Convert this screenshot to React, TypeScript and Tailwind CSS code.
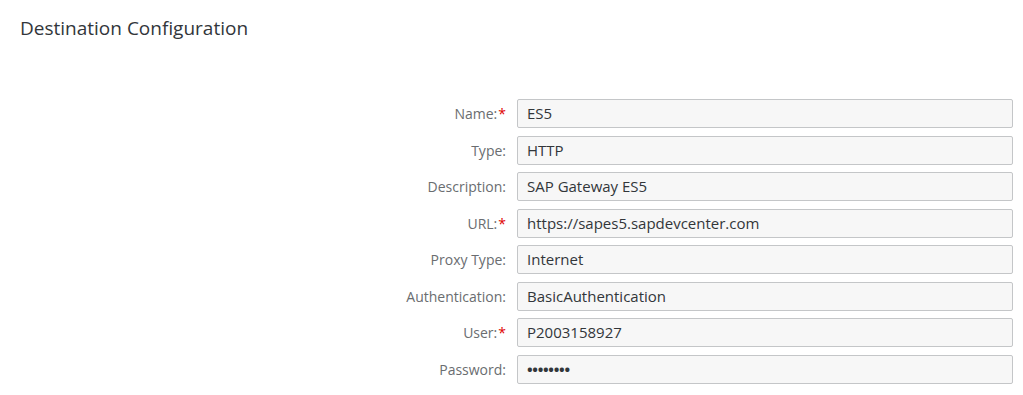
const fields = [
  { label: 'Name', value: 'ES5', required: true },
  { label: 'Type', value: 'HTTP' },
  { label: 'Description', value: 'SAP Gateway ES5' },
  { label: 'URL', value: 'https://sapes5.sapdevcenter.com', required: true },
  { label: 'Proxy Type', value: 'Internet' },
  { label: 'Authentication', value: 'BasicAuthentication' },
  { label: 'User', value: 'P2003158927', required: true },
  { label: 'Password', value: '••••••••', secret: true },
]

export default function App() {
  return (
    <div className="h-[395px] w-[1023px] bg-white font-['Open_Sans',sans-serif]">
      <h2 className="pl-[20px] pt-[14px] text-[19px] leading-[28px] text-[#32363a]">Destination Configuration</h2>

      <div className="mt-[57px] grid grid-cols-[506px_496px] gap-x-[11px] gap-y-[7.5px]">
        {fields.map((f) => (
          <div key={f.label} className="contents">
            <div className="flex h-[29px] items-center justify-end text-[14px] text-[#6a6d70]">
              {f.label}:
              {f.required && <span className="pl-[1px] text-[#e00000]">*</span>}
            </div>
            <div className="flex h-[29px] items-center rounded-[2px] border border-[#c4c6c8] bg-[#f7f7f7] px-[9px] text-[15px] text-[#32363a]">
              {f.secret ? <span className="font-bold tracking-[-0.3px]">{f.value}</span> : f.value}
            </div>
          </div>
        ))}
      </div>
    </div>
  )
}
